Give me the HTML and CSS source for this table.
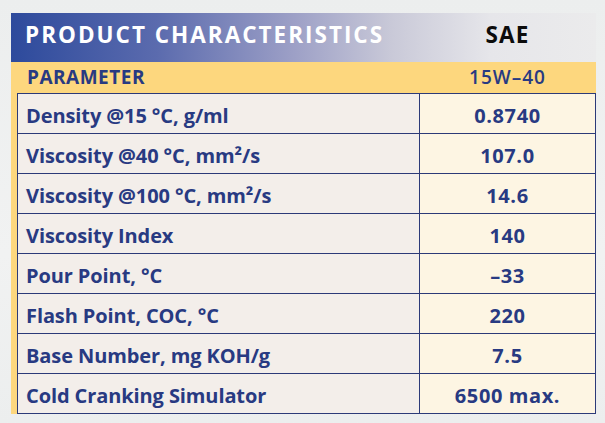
FILE: index.html
```html
<!DOCTYPE html>
<html lang="en">
<head>
<meta charset="utf-8">
<title>Product Characteristics</title>
<link rel="stylesheet" href="styles.css">
</head>
<body>
<div class="sheet">
  <div class="title-bar">
    <div class="title-main">PRODUCT CHARACTERISTICS</div>
    <div class="title-sae">SAE</div>
  </div>
  <div class="param-bar">
    <div class="param-name">PARAMETER</div>
    <div class="param-grade">15W–40</div>
  </div>
  <div class="rows">
    <div class="row"><div class="cell-name">Density @15 °C, g/ml</div><div class="cell-val">0.8740</div></div>
    <div class="row"><div class="cell-name">Viscosity @40 °C, mm²/s</div><div class="cell-val">107.0</div></div>
    <div class="row"><div class="cell-name">Viscosity @100 °C, mm²/s</div><div class="cell-val">14.6</div></div>
    <div class="row"><div class="cell-name">Viscosity Index</div><div class="cell-val">140</div></div>
    <div class="row"><div class="cell-name">Pour Point, °C</div><div class="cell-val">–33</div></div>
    <div class="row"><div class="cell-name">Flash Point, COC, °C</div><div class="cell-val">220</div></div>
    <div class="row"><div class="cell-name">Base Number, mg KOH/g</div><div class="cell-val">7.5</div></div>
    <div class="row"><div class="cell-name">Cold Cranking Simulator</div><div class="cell-val">6500 max.</div></div>
  </div>
</div>
</body>
</html>
```

FILE: styles.css
```css
html, body {
  margin: 0;
  padding: 0;
}
body {
  width: 605px;
  height: 423px;
  overflow: hidden;
  background: linear-gradient(180deg, #eceeee 0%, #f1f2f2 60%, #eceeee 100%);
  font-family: "Open Sans", Lato, sans-serif;
  font-weight: 700;
  color: #283a82;
}
.sheet {
  margin: 13px 0 0 11px;
  width: 585px;
}
.title-bar {
  display: grid;
  grid-template-columns: 408px 1fr;
  height: 49px;
  align-items: start;
  background: linear-gradient(90deg, #2d4a9c 0%, #5b6bae 25%, #9c9fc6 48%, #c9c9d8 65%, #e6e6ea 82%, #ebebec 100%);
  font-size: 22.5px;
  line-height: normal;
}
.title-main {
  padding: 6px 0 0 14px;
  color: #ffffff;
  letter-spacing: 2px;
  white-space: nowrap;
}
.title-sae {
  padding-top: 6px;
  text-align: center;
  color: #0c0c0c;
  letter-spacing: 1.2px;
}
.param-bar {
  display: grid;
  grid-template-columns: 408px 1fr;
  height: 31px;
  align-items: start;
  background: #fdd77e;
  font-size: 19px;
  line-height: normal;
}
.param-name {
  padding: 2px 0 0 16px;
  letter-spacing: 0.5px;
}
.param-grade {
  padding-top: 2px;
  text-align: center;
  letter-spacing: 1px;
  font-weight: 600;
}
.rows {
  border-left: 6px solid #fdd77e;
}
.row {
  display: grid;
  grid-template-columns: 401px 1fr;
  height: 39px;
  border-top: 1px solid #2c3a78;
  border-left: 1px solid #2c3a78;
  border-right: 1px solid #2c3a78;
  font-size: 20px;
  line-height: normal;
}
.row:last-child {
  border-bottom: 1px solid #2c3a78;
}
.cell-name {
  padding: 8px 0 0 8px;
  background: #f3eeea;
  letter-spacing: -0.1px;
  white-space: nowrap;
}
.cell-val {
  padding-top: 8px;
  border-left: 1px solid #2c3a78;
  background: #fdf5e3;
  text-align: center;
  letter-spacing: 0.6px;
}
```
